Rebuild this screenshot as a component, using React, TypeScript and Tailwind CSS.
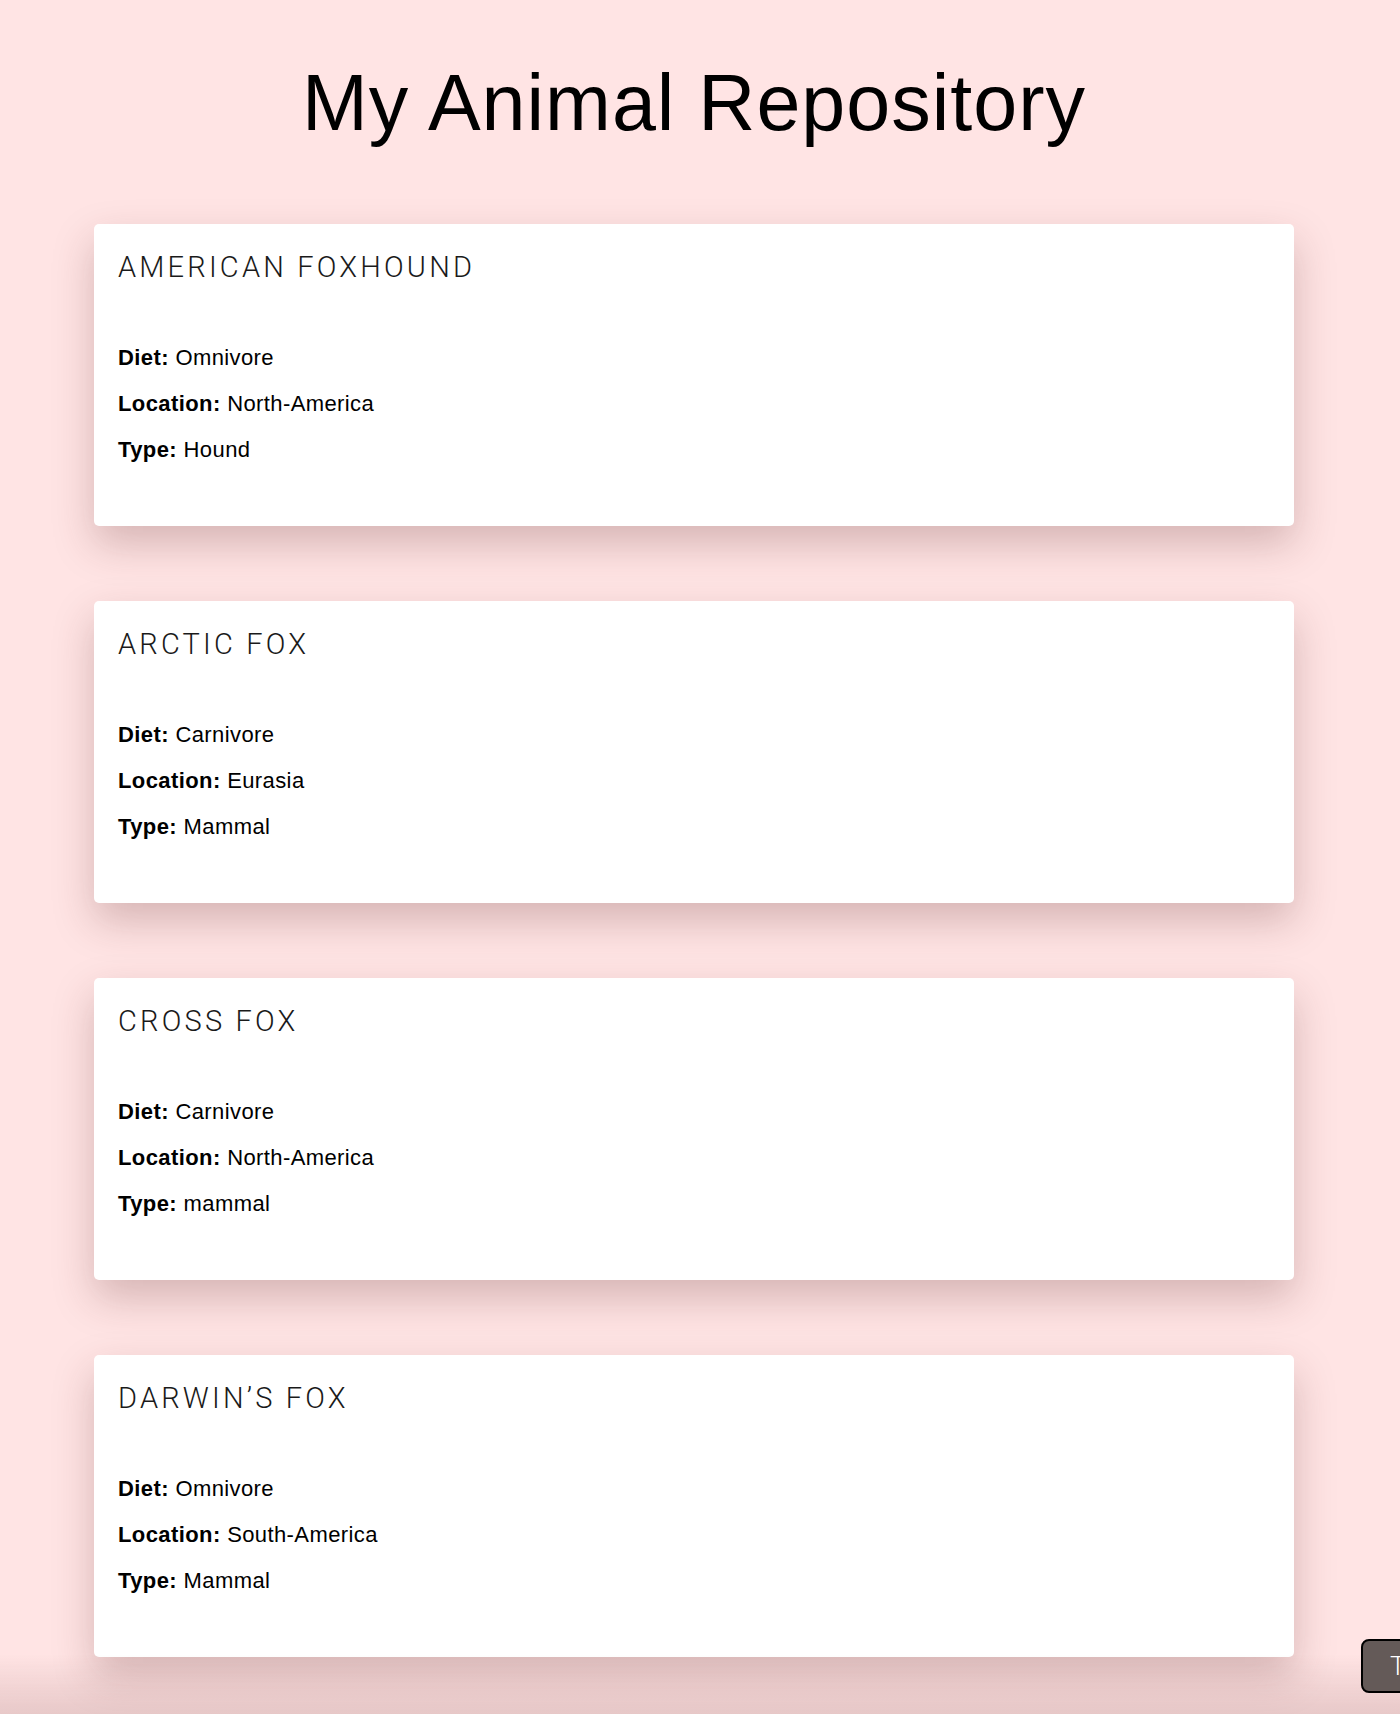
import React from "react";

type Animal = {
  name: string;
  diet: string;
  location: string;
  type: string;
};

const animals: Animal[] = [
  { name: "American Foxhound", diet: "Omnivore", location: "North-America", type: "Hound" },
  { name: "Arctic Fox", diet: "Carnivore", location: "Eurasia", type: "Mammal" },
  { name: "Cross Fox", diet: "Carnivore", location: "North-America", type: "mammal" },
  { name: "Darwin's Fox", diet: "Omnivore", location: "South-America", type: "Mammal" },
];

function Field({ label, value }: { label: string; value: string }) {
  return (
    <p className="text-[22px] leading-[24px] tracking-[0.4px] text-black">
      <span className="font-bold">{label}:</span> {value}
    </p>
  );
}

function AnimalCard({ animal }: { animal: Animal }) {
  return (
    <div className="rounded-[5px] bg-white px-6 pt-[26px] pb-[64px] shadow-[0_18px_40px_rgba(90,40,40,0.25)]">
      <h2 className="font-['Roboto',sans-serif] text-[29px] font-light uppercase leading-[34px] tracking-[3.2px] text-[#1a1a1a]">
        {animal.name.replace("'", "’")}
      </h2>
      <div className="mt-[62px] flex flex-col gap-[22px]">
        <Field label="Diet" value={animal.diet} />
        <Field label="Location" value={animal.location} />
        <Field label="Type" value={animal.type} />
      </div>
    </div>
  );
}

export default function App() {
  return (
    <div className="min-h-screen bg-[#ffe4e4] font-['Liberation_Sans',Arial,sans-serif] pb-[120px]">
      <div className="ml-[94px] w-[1200px]">
        <h1 className="pt-[59px] text-center text-[79px] leading-[88px] tracking-[1px] text-black">My Animal Repository</h1>
        <div className="mt-[77px] flex flex-col gap-[75px]">
          {animals.map((a) => (
            <AnimalCard key={a.name} animal={a} />
          ))}
        </div>
      </div>

      {/* fade at the bottom of the window */}
      <div className="pointer-events-none fixed inset-x-0 bottom-0 h-[60px] bg-gradient-to-b from-transparent to-[rgba(110,60,60,0.16)]" />

      <button
        type="button"
        className="fixed left-[1361px] top-[1639px] h-[54px] w-[140px] rounded-[8px] border-2 border-black bg-[#645a58] pl-[27px] text-left font-['Roboto',sans-serif] text-[26px] font-light text-white"
      >
        Top
      </button>
    </div>
  );
}
